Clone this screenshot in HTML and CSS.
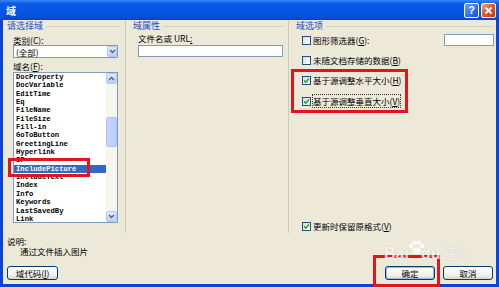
FILE: index.html
```html
<!DOCTYPE html>
<html lang="en">

<head>
  <meta charset="UTF-8">
  <meta name="viewport" content="width=device-width, initial-scale=1.0">
  <title>域</title>
  <link rel="stylesheet" href="styles.css">
</head>

<body>
  <div class="window">
    <div class="titlebar">
      <span class="title">域</span>
      <span class="cap-btn help">?</span>
      <span class="cap-btn close">
        <svg width="9" height="9" viewBox="0 0 9 9"><path d="M1.5 1.5l6 6M7.5 1.5l-6 6" stroke="#fff" stroke-width="1.8" /></svg>
      </span>
    </div>

    <div class="client">
      <div class="panels">
        <section class="panel pick">
          <h2 class="group-head">请选择域</h2>
          <div class="panel-body">
            <label class="lbl">类别(<u>C</u>):</label>
            <div class="combo">
              <span class="combo-text">(全部)</span>
              <span class="sb-btn"><svg width="7" height="5" viewBox="0 0 7 5"><path d="M1 1l2.5 2.5L6 1" fill="none" stroke="#4d6185" stroke-width="1.4" /></svg></span>
            </div>
            <label class="lbl lbl-gap">域名(<u>F</u>):</label>
            <div class="listbox">
              <ul class="items">
                <li>DocProperty</li>
                <li>DocVariable</li>
                <li>EditTime</li>
                <li>Eq</li>
                <li>FileName</li>
                <li>FileSize</li>
                <li>Fill-in</li>
                <li>GoToButton</li>
                <li>GreetingLine</li>
                <li>Hyperlink</li>
                <li>IF</li>
                <li class="selected">IncludePicture</li>
                <li>IncludeText</li>
                <li>Index</li>
                <li>Info</li>
                <li>Keywords</li>
                <li>LastSavedBy</li>
                <li>Link</li>
              </ul>
              <div class="vscroll">
                <span class="sb-btn"><svg width="7" height="5" viewBox="0 0 7 5"><path d="M1 4l2.5-2.5L6 4" fill="none" stroke="#4d6185" stroke-width="1.4" /></svg></span>
                <div class="track"><span class="thumb"></span></div>
                <span class="sb-btn"><svg width="7" height="5" viewBox="0 0 7 5"><path d="M1 1l2.5 2.5L6 1" fill="none" stroke="#4d6185" stroke-width="1.4" /></svg></span>
              </div>
            </div>
          </div>
        </section>

        <section class="panel props">
          <h2 class="group-head">域属性</h2>
          <div class="panel-body">
            <label class="lbl">文件名或 URL<u>:</u></label>
            <div class="field wide"></div>
          </div>
        </section>

        <section class="panel opts">
          <h2 class="group-head">域选项</h2>
          <div class="panel-body">
            <div class="opt first">
              <span class="cb"></span>
              <span>图形筛选器(<u>G</u>):</span>
              <span class="field small"></span>
            </div>
            <div class="opt">
              <span class="cb"></span>
              <span>未随文档存储的数据(<u>B</u>)</span>
            </div>
            <div class="marked">
              <div class="opt">
                <span class="cb"><svg width="7" height="7" viewBox="0 0 7 7"><path d="M1 3.4l1.8 1.8L6 1.6" fill="none" stroke="#21a121" stroke-width="1.5" /></svg></span>
                <span>基于源调整水平大小(<u>H</u>)</span>
              </div>
              <div class="opt second">
                <span class="cb"><svg width="7" height="7" viewBox="0 0 7 7"><path d="M1 3.4l1.8 1.8L6 1.6" fill="none" stroke="#21a121" stroke-width="1.5" /></svg></span>
                <span class="focus">基于源调整垂直大小(<u>V</u>)</span>
              </div>
            </div>
            <div class="opt last">
              <span class="cb"><svg width="7" height="7" viewBox="0 0 7 7"><path d="M1 3.4l1.8 1.8L6 1.6" fill="none" stroke="#21a121" stroke-width="1.5" /></svg></span>
              <span>更新时保留原格式(<u>V</u>)</span>
            </div>
          </div>
        </section>
      </div>

      <div class="desc">
        <div>说明:</div>
        <div class="desc-text">通过文件插入图片</div>
      </div>

      <div class="footer">
        <button class="btn code">域代码(<u>I</u>)</button>
        <button class="btn ok">确定</button>
        <button class="btn">取消</button>
      </div>
    </div>

    <span class="mark mark-item"></span>
    <span class="mark mark-ok"></span>

    <div class="watermark">
      <span>Bai</span>
      <svg class="paw" width="18" height="16" viewBox="0 0 18 16">
        <circle cx="4" cy="6" r="2.2" /><circle cx="7.5" cy="2.6" r="2.2" /><circle cx="11.5" cy="2.6" r="2.2" /><circle cx="15" cy="6" r="2.2" />
        <ellipse cx="9.5" cy="11" rx="4.5" ry="3.6" />
      </svg>
      <span>du</span>
      <span class="wm-cn">经验</span>
    </div>
  </div>
</body>

</html>
```

FILE: styles.css
```css
* {
  box-sizing: border-box;
}

body {
  margin: 0;
  font-family: "Noto Sans CJK SC", "Noto Sans", sans-serif;
  font-size: 8.5px;
  color: #000;
  background: #fff;
}

u {
  text-decoration: underline;
}

.window {
  position: relative;
  width: 499px;
  height: 287px;
  display: flex;
  flex-direction: column;
  background: #0b44d6;
  overflow: hidden;
}

.titlebar {
  height: 20px;
  flex: none;
  display: flex;
  align-items: center;
  gap: 2px;
  padding: 0 3px 0 6px;
  background: linear-gradient(#3a86f8, #0c5ce8 18%, #0656e6 55%, #0a4dd6 90%, #0840c4);
  color: #fff;
}

.title {
  flex: 1;
  font-weight: bold;
  font-size: 10px;
}

.cap-btn {
  width: 15px;
  height: 15px;
  border: 1px solid #fff;
  border-radius: 2px;
  display: flex;
  align-items: center;
  justify-content: center;
}

.help {
  background: linear-gradient(135deg, #6fa3ff, #2565e8 70%, #1c54d8);
  font: bold 11px "Liberation Sans", sans-serif;
}

.close {
  background: linear-gradient(135deg, #f3a384, #e2582e 45%, #c93a18);
}

.client {
  flex: 1;
  margin: 0 3px 3px;
  background: #ece9d8;
  display: flex;
  flex-direction: column;
  padding-bottom: 4px;
}

.panels {
  display: grid;
  grid-template-columns: 123px 163px 1fr;
  height: 213px;
}

.panel {
  display: flex;
  flex-direction: column;
  padding-top: 1px;
}

.pick,
.props {
  border-right: 1px solid #cdc9b8;
}

.pick {
  padding: 1px 5px 0 4px;
}

.props {
  padding: 1px 4px 0 7px;
}

.opts {
  padding: 1px 2px 1px 7px;
}

.group-head {
  margin: 0;
  height: 10px;
  line-height: 10px;
  font-size: 9px;
  font-weight: normal;
  color: #1b4fc8;
  display: flex;
  align-items: center;
  gap: 3px;
  white-space: nowrap;
}

.group-head::after {
  content: "";
  flex: 1;
  border-top: 1px solid #d3d0bf;
}

.panel-body {
  flex: 1;
  display: flex;
  flex-direction: column;
}

.pick .panel-body {
  margin: 4px 2px 0 6px;
}

.props .panel-body {
  margin: 2px 1px 0 5px;
}

.opts .panel-body {
  margin-left: 6px;
}

.lbl {
  display: block;
  height: 10px;
  line-height: 10px;
  white-space: nowrap;
}

.lbl-gap {
  margin-top: 3px;
}

.combo {
  height: 13px;
  display: flex;
  align-items: center;
  background: #fff;
  border: 1px solid #7f9db9;
  padding: 1px 0 1px 2px;
}

.combo-text {
  flex: 1;
}

.sb-btn {
  width: 11px;
  height: 11px;
  flex: none;
  display: flex;
  align-items: center;
  justify-content: center;
  background: linear-gradient(#e1eafe, #bdd0fa);
  border: 1px solid #b2c6f3;
  border-radius: 2px;
}

.combo .sb-btn {
  width: 10px;
}

.listbox {
  margin-top: 1px;
  height: 151px;
  display: flex;
  background: #fff;
  border: 1px solid #7f9db9;
}

.items {
  flex: 1;
  list-style: none;
  margin: 0;
  padding: 0;
  font: bold 7.2px "Liberation Mono", monospace;
}

.items li {
  height: 8.35px;
  line-height: 8.35px;
  padding-left: 2px;
  white-space: nowrap;
}

.items li.selected {
  background: #316ac5;
  color: #fff;
}

.vscroll {
  width: 11px;
  display: flex;
  flex-direction: column;
  background: #f6f5ee;
}

.track {
  flex: 1;
}

.thumb {
  display: block;
  height: 30px;
  margin-top: 33px;
  background: linear-gradient(90deg, #c6d6fc, #b8cdfa);
  border: 1px solid #aec3f2;
  border-radius: 2px;
}

.field {
  background: #fff;
  border: 1px solid #7f9db9;
}

.field.wide {
  margin-top: 2px;
  height: 12px;
}

.field.small {
  width: 50px;
  height: 12px;
  margin-left: auto;
}

.opt {
  height: 12px;
  display: flex;
  align-items: center;
  gap: 2px;
  margin-top: 8px;
  white-space: nowrap;
}

.opt.first {
  margin-top: 3px;
}

.opt.second {
  margin-top: 9px;
}

.opt.last {
  margin-top: auto;
}

.cb {
  width: 9px;
  height: 9px;
  flex: none;
  display: flex;
  align-items: center;
  justify-content: center;
  background: linear-gradient(135deg, #dcdcd5, #fff);
  border: 1px solid #1c5180;
}

.focus {
  outline: 1px dotted #333;
}

.marked {
  width: 111px;
  margin: 6px 0 0 -8px;
  padding: 2px 0 3px 8px;
  outline: 3px solid #e3151c;
}

.marked .opt:first-child {
  margin-top: 0;
}

.desc {
  padding: 3px 0 0 4px;
  line-height: 10px;
}

.desc-text {
  padding-left: 13px;
}

.footer {
  margin-top: auto;
  display: flex;
  gap: 8px;
  padding: 0 3px 0 4px;
}

.btn {
  height: 14px;
  width: 50px;
  padding: 0;
  font: 8.5px "Noto Sans CJK SC", sans-serif;
  color: #000;
  border: 1px solid #003c74;
  border-radius: 3px;
  background: linear-gradient(#fff, #f1f0ea 70%, #d8d3c6);
}

.btn.code {
  width: 51px;
}

.btn.ok {
  margin-left: auto;
  box-shadow: inset 0 0 0 1px #9ab9ec;
}

.mark {
  position: absolute;
  border: 3px solid #e3151c;
}

.mark-item {
  left: 8px;
  top: 158px;
  width: 82px;
  height: 19px;
}

.mark-ok {
  left: 373px;
  top: 255px;
  width: 67px;
  height: 32px;
}

.watermark {
  position: absolute;
  left: 384px;
  top: 240px;
  display: flex;
  align-items: flex-end;
  color: rgba(255, 255, 255, 0.8);
  font: bold 16px "Liberation Sans", sans-serif;
  line-height: 16px;
  text-shadow: 0 0 1px rgba(120, 120, 110, 0.35);
  pointer-events: none;
}

.paw {
  fill: rgba(255, 255, 255, 0.8);
  margin: 0 -4px 6px -2px;
}

.wm-cn {
  margin-left: 3px;
  font: 13px "Noto Sans CJK SC", sans-serif;
  color: rgba(255, 255, 255, 0.75);
}
```
